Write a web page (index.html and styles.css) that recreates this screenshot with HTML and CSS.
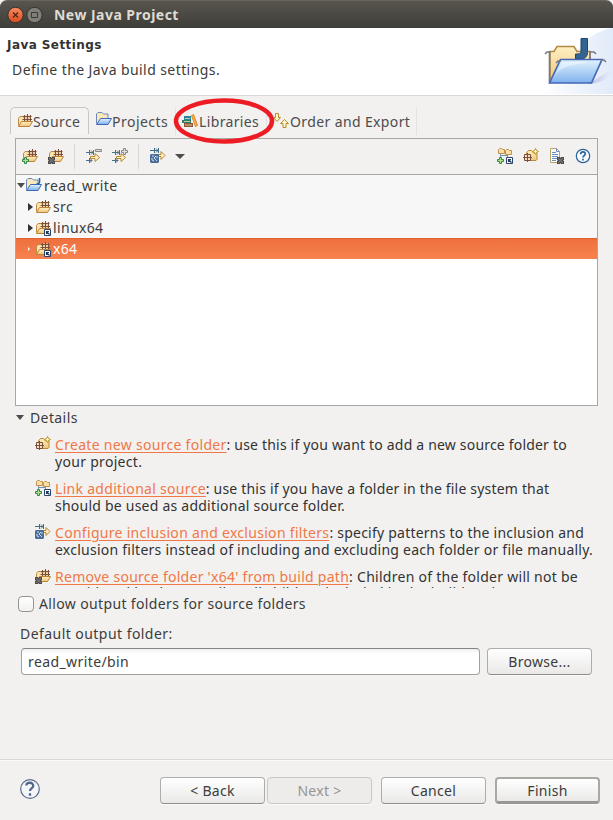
FILE: index.html
```html
<!DOCTYPE html>
<html lang="en">
<head>
<meta charset="utf-8">
<title>New Java Project</title>
<link rel="stylesheet" href="styles.css">
</head>
<body>
<svg class="defs" width="0" height="0" aria-hidden="true">
  <defs>
    <linearGradient id="gold" x1="0" y1="0" x2="0" y2="1"><stop offset="0" stop-color="#fff0c4"/><stop offset="1" stop-color="#eec477"/></linearGradient>
    <linearGradient id="blue" x1="0" y1="0" x2="0" y2="1"><stop offset="0" stop-color="#e3f3ff"/><stop offset="1" stop-color="#7eb1ed"/></linearGradient>
    <symbol id="source" viewBox="0 0 16 16">
      <path d="M1.500 12.500V5.500L3 3.500h3L7.500 5H13v6" fill="#fae3ae" stroke="#bf8a43"/>
      <path d="M7 2.500h6.500v6H7z" fill="#eccfa6"/>
      <path d="M6 3.500h8.500M5.500 6.500H15M7.500 2v6M10.500 1v7M13.500 2v6" fill="none" stroke="#79503b"/>
      <path d="M1.500 13.500L4.500 8.500h11l-3 5z" fill="url(#gold)" stroke="#bb8335"/>
    </symbol>
    <symbol id="plus" viewBox="0 0 16 16"><path d="M2.500 9.500h2v2h2v2h-2v2h-2v-2h-2v-2h2z" fill="#b5e08b" stroke="#2f8a4a"/></symbol>
    <symbol id="cross" viewBox="0 0 16 16"><path d="M0 9h7v7H0z" fill="#484848"/><path d="M1 10l5 5M6 10l-5 5" stroke="#777" stroke-width="1.200"/><path d="M3 9.500h1M0 12.500h1M6 12.500h1M3 15.500h1" stroke="#aaa"/></symbol>
    <symbol id="link" viewBox="0 0 16 16"><path d="M9.500 9.500h6v6h-6z" fill="#fff" stroke="#28446c"/><path d="M11.500 14v-2.500H14M11.500 11.500l3 3" fill="none" stroke="#20395d" stroke-width="1.200"/></symbol>
    <symbol id="new" viewBox="0 0 16 16">
      <path d="M3.500 12V5L5.500 2.500h3L10.500 5H14v6.500l-1 1H6" fill="url(#gold)" stroke="#bd872e"/>
      <path d="M12.500.5l1 2 2 1-2 1-1 2-1-2-2-1 2-1z" fill="#fff6bd" stroke="#b59422"/>
      <path d="M1.500 6.500h6v6h-6zM0 9.500h9M4.500 5v9" fill="#f4dcc2" stroke="#79503b"/>
    </symbol>
    <symbol id="addlink" viewBox="0 0 16 16">
      <path d="M1.500 5.500v-4l1-1h2l1 1h2v4zM8.500 6.500v-4l1-1h2l1 1h2v4z" fill="#fae1a2" stroke="#c29050"/>
      <path d="M3.500 6v3M10.500 7v2M4 7.500h6" stroke="#7595b1" fill="none"/>
      <use href="#plus"/><use href="#link"/>
    </symbol>
    <symbol id="arrow" viewBox="0 0 16 16"><path d="M4.500 8.500H9v-3l4.500 4-4.500 4v-3H4.500z" fill="#fff2c6" stroke="#b8862c"/></symbol>
    <symbol id="incl" viewBox="0 0 16 16">
      <path d="M0 4.500h7M0 12.500h6M3.500 2v5M7.500 2v5M3.500 10v5M5 2.500l2 2-2 2M4 10.500l2 2-2 2" stroke="#4b7089" fill="none"/>
      <use href="#arrow"/>
    </symbol>
    <symbol id="filter" viewBox="0 0 16 16">
      <path d="M0 2.500h8M4.500 0v5M8.500 0v5M6 .500l2 2-2 2" stroke="#446c87" fill="none"/>
      <path d="M8 6.500h3v-3l4 4-4 4v-3H8z" fill="#fff2c6" stroke="#b8862c"/>
      <path d="M1 6h7l1 1v7l-1 1H1l-1-1V7z" fill="#4a6e99"/><path d="M2 8h2M6 8l-2 2 3 3M2 10v2l2 1M6 9h2" stroke="#d3dfed" fill="none"/>
    </symbol>
    <symbol id="project" viewBox="0 0 16 16">
      <path d="M.5 12.500V3L2 1.500h4L7.500 3H12v5" fill="#f9e9b8" stroke="#6c86b7"/>
      <path d="M.5 13.500L4.500 7.500h11l-3.500 6z" fill="url(#blue)" stroke="#4068b9"/>
    </symbol>
    <symbol id="books" viewBox="0 0 16 16">
      <path d="M2 3h7v4H2z" fill="#2787a0"/><path d="M0 7h9v3H0z" fill="#2d8068"/><path d="M2 10h9v4H2z" fill="#93563b"/><path d="M3 5.500h5M2 8.500h6M3 12h7" stroke="#cdc29b"/><path d="M9.500 2.500l2-1 4 11-2 1z" fill="#f8b64c" stroke="#d88524"/>
    </symbol>
    <symbol id="order" viewBox="0 0 16 16"><path d="M2.500.5h3v4h2l-3.500 4-3.500-4h2zM10 14.500h3v-4h2.500l-4-4-4 4H10z" fill="#fff6cf" stroke="#b88b2b"/></symbol>
    <symbol id="edit" viewBox="0 0 16 16"><path d="M1.500.5h6l3 3v11h-9z" fill="#fafcff" stroke="#b5a56a"/><path d="M7.500.5v3h3M3 4.500h4M3 6.500h6M3 8.500h6M3 10.500h5M3 12.500h4" fill="none" stroke="#6b8fbe"/><use href="#cross" x="8"/></symbol>
    <symbol id="help" viewBox="0 0 16 16"><circle cx="8" cy="8" r="6.700" fill="#f9fbff" stroke="#286296" stroke-width="1.200"/><path d="M5.700 6.200c0-3 4.800-2.900 4.600-.2C10.200 7.500 8 7.700 8 9.500M8 10.700v1.700" fill="none" stroke="#286296" stroke-width="1.700"/></symbol>
  </defs>
</svg>

<main class="window">
  <header class="titlebar">
    <svg class="controls" viewBox="0 0 44 28">
      <defs><linearGradient id="close" x1="0" y1="0" x2="0" y2="1"><stop stop-color="#f78b61"/><stop offset="1" stop-color="#dd4b20"/></linearGradient></defs>
      <circle cx="15.500" cy="14" r="7.700" fill="url(#close)" stroke="#35322d"/><path d="M13 11.500l5 5M18 11.500l-5 5" stroke="#522617" stroke-width="1.300"/>
      <circle cx="34.500" cy="14" r="7.700" fill="#807e77" stroke="#34332e"/><path d="M31.500 11.500h6v5h-6z" fill="none" stroke="#3b3934"/>
    </svg>
    <h1>New Java Project</h1>
  </header>

  <section class="banner">
    <div class="banner-copy"><h2>Java Settings</h2><p>Define the Java build settings.</p></div>
    <svg class="banner-art" viewBox="0 0 75 66">
      <defs><linearGradient id="haze"><stop stop-color="#fff"/><stop offset="1" stop-color="#d8e4f7"/></linearGradient><linearGradient id="shade"><stop stop-color="#8b94c0" stop-opacity=".6"/><stop offset="1" stop-color="#b5b5d8" stop-opacity="0"/></linearGradient></defs>
      <path d="M0 66C28 64 29 7 75 0v66z" fill="url(#haze)" opacity=".75"/>
      <path d="M50 56l22-14c4 3-3 12-20 14z" fill="url(#shade)"/>
      <path d="M12 54V23.500h4l3-5h17l3 5h13V54" fill="url(#gold)" stroke="#b18a42" stroke-width="1.500"/>
      <path d="M7 26l2-2h3M11.500 23v31M52 24h4l2 2M52 23v10" fill="none" stroke="#777985" stroke-width="1.600"/>
      <path d="M43 10.500h6.500v14c0 4-3 6.500-6 6.500h-6v-5H40c2 0 3-1 3-3z" fill="#336591" stroke="#1d4673"/>
      <path d="M11.500 55L22.500 31.500H64L53.500 55z" fill="url(#blue)" stroke="#4667b6" stroke-width="1.700"/>
      <path d="M14 52c7-8 3-13 38-18H24z" fill="#fff" opacity=".4"/>
      <path d="M18 35l2-2h3M63 32h3l2 2" fill="none" stroke="#777985" stroke-width="1.600"/>
    </svg>
  </section>

  <nav class="tabs">
    <div class="tab active"><svg><use href="#source"/></svg><span>Source</span></div>
    <div class="tab projects"><svg><use href="#project"/></svg><span>Projects</span></div>
    <div class="tab libraries"><svg><use href="#books"/></svg><span>Libraries</span><svg class="ring" viewBox="0 0 102 46"><ellipse cx="51" cy="23" rx="48" ry="20.500"/></svg></div>
    <div class="tab order"><svg><use href="#order"/></svg><span>Order and Export</span></div>
  </nav>

  <section class="panel">
    <div class="toolbar">
      <svg><use href="#source"/><use href="#plus"/></svg>
      <svg class="g10"><use href="#source"/><use href="#cross"/></svg>
      <i class="sep"></i>
      <svg class="g11"><use href="#incl"/><path d="M9.500 1.500h6v2h-6z" fill="#ddd" stroke="#888"/></svg>
      <svg class="g10"><use href="#incl"/><path d="M11.500.5h2v2h2v2h-2v2h-2v-2h-2v-2h2z" fill="#ddd" stroke="#888"/></svg>
      <i class="sep"></i>
      <svg class="g11"><use href="#filter"/></svg>
      <i class="down menu"></i>
      <svg class="right"><use href="#addlink"/></svg>
      <svg class="g10"><use href="#new"/></svg>
      <svg class="g10"><use href="#edit"/></svg>
      <svg class="g10"><use href="#help"/></svg>
    </div>
    <div class="tree">
      <div class="row root"><i class="down"></i><svg><use href="#project"/><path d="M13.500 1v4q0 2-3 2" fill="none" stroke="#286799" stroke-width="1.600"/></svg><span>read_write</span></div>
      <div class="row"><i class="side"></i><svg><use href="#source"/></svg><span>src</span></div>
      <div class="row"><i class="side"></i><svg><use href="#source"/><use href="#link"/></svg><span>linux64</span></div>
      <div class="row selected"><i class="side"></i><svg><use href="#source"/><use href="#link"/></svg><span>x64</span></div>
    </div>
  </section>

  <div class="details-title"><i class="down"></i><span>Details</span></div>
  <section class="details">
    <div class="hint"><svg><use href="#new"/></svg><p><a>Create new source folder</a>: use this if you want to add a new source folder to<br><span class="wide">your project.</span></p></div>
    <div class="hint"><svg><use href="#addlink"/></svg><p><a>Link additional source</a>: use this if you have a folder in the file system that<br><span class="mid">should be used as additional source folder.</span></p></div>
    <div class="hint"><svg><use href="#filter"/></svg><p class="mid"><a>Configure inclusion and exclusion filters</a>: specify patterns to the inclusion and<br><span class="manual">exclusion filters instead of including and excluding each folder or file manually.</span></p></div>
    <div class="hint"><svg><use href="#source"/><use href="#cross"/></svg><p class="last"><a>Remove source folder 'x64' from build path</a>: Children of the folder will not be<span class="clipped">considered by the compiler, all children included in the build path</span></p></div>
  </section>
  <label class="allow"><i class="check"></i><span>Allow output folders for source folders</span></label>
  <div class="output-label">Default output folder:</div>
  <div class="output"><div class="field">read_write/bin</div><div class="button browse">Browse...</div></div>
  <footer class="footer">
    <svg class="footer-help" viewBox="0 0 20 20"><circle cx="10" cy="10" r="9.300" fill="#f5f6f8" stroke="#5a6c8b" stroke-width="1.200"/><path d="M6.300 6.500C6.500 2.500 13.500 3 13.200 7c-.2 2.500-3.200 2.500-3.200 5M10 14.200v2.500" fill="none" stroke="#52688d" stroke-width="2.300"/></svg>
    <div class="button back">&lt; Back</div>
    <div class="button next">Next &gt;</div>
    <div class="button cancel">Cancel</div>
    <div class="button finish">Finish</div>
  </footer>
</main>
</body>
</html>
```
FILE: styles.css
```css
* { box-sizing: border-box; }
body { margin: 0; background: #f2f1f0; color: #3c3c3c; font: 14px/17px "Noto Sans", sans-serif; letter-spacing: .4px; }
h1, h2, p { margin: 0; }
.defs { position: absolute; }
.window { width: 613px; height: 820px; display: flex; flex-direction: column; overflow: hidden; white-space: nowrap; }
svg { display: block; flex: none; width: 16px; height: 16px; }
.titlebar { height: 28px; flex: none; display: flex; align-items: center; background: linear-gradient(#57554d, #3e3d39); border-top: 1px solid #66645c; border-radius: 7px 7px 0 0; color: #dfdbd2; }
.titlebar .controls { width: 44px; height: 28px; }
h1 { margin-left: 10px; font-size: 14px; font-weight: 700; letter-spacing: .47px; }
.banner { height: 68px; flex: none; display: flex; justify-content: space-between; background: #fff; border-bottom: 1px solid #d8d7d5; }
.banner-copy { padding: 8px 0 0 7px; }
h2 { font: bold 12px/17px "DejaVu Sans", sans-serif; color: #333; letter-spacing: .42px; padding-top: 1px; }
.banner-copy p { padding: 7px 0 0 5px; letter-spacing: .42px; }
.banner .banner-art { width: 75px; height: 66px; }
.tabs { height: 42px; flex: none; padding: 11px 0 0 10px; display: flex; }
.tab { display: flex; align-items: center; height: 28px; color: #4c4c4c; }
.tab span { padding-top: 1px; }
.active { width: 79px; height: 27px; padding: 0 0 1px 6px; border: 1px solid #c9c7c5; border-bottom: 0; border-radius: 5px 5px 0 0; background: #f4f3f2; }
.projects { width: 87px; padding-left: 7px; border-right: 1px solid #e3e2e0; letter-spacing: .48px; }
.projects svg { margin-bottom: 4px; }
.libraries { position: relative; width: 91px; padding-left: 6px; border-right: 1px solid #e3e2e0; letter-spacing: .36px; }
.libraries span { padding-left: 1px; }
.order { width: 150px; padding-left: 6px; border-right: 1px solid #e3e2e0; letter-spacing: .38px; }
.order span { padding-left: 1px; }
.tab .ring { position: absolute; z-index: 2; left: -3px; top: -9px; width: 102px; height: 46px; overflow: visible; }
.ring ellipse { fill: none; stroke: #ed1c24; stroke-width: 4.5px; }
.panel { flex: none; width: 583px; height: 268px; margin-left: 15px; border: 1px solid #a9a7a4; background: #fff; }
.toolbar { height: 36px; display: flex; align-items: center; padding: 0 6px 1px 6px; background: #f2f1f0; border-bottom: 1px solid #a9a7a4; }
.sep { width: 1px; height: 25px; background: #d8d7d5; margin-left: 10px; }
.g10 { margin-left: 10px; }
.g11 { margin-left: 11px; }
.down { width: 0; height: 0; flex: none; border: 4px solid transparent; border-top: 5px solid #4c4c4c; border-bottom: 0; }
.menu { border-width: 5px; border-top-width: 5px; border-bottom: 0; margin-left: 9px; }
.right { margin-left: auto; }
.row { height: 21px; display: flex; align-items: center; padding-left: 12px; background: #f7f7f7; letter-spacing: .35px; }
.row svg { margin: 0 1px 0 2px; }
.root { padding-left: 1px; letter-spacing: .4px; }
.root svg { margin: 0 2px 2px 1px; }
.side { width: 5px; border: 4px solid transparent; border-left: 5px solid #333; border-right: 0; }
.row span { padding-left: 1px; }
.root span { padding-left: 0; }
.selected { color: #fff; background: linear-gradient(#ed6f3c, #f88350); box-shadow: inset 0 1px #df622f; }
.selected .side { border-width: 2px 0 2px 2px; border-left-color: #fff; width: 2px; margin-right: 3px; }
.details-title { flex: none; height: 26px; display: flex; align-items: center; padding: 0 0 3px 16px; }
.details-title span { margin-left: 6px; }
.details { flex: none; height: 156px; padding: 4px 0 0 35px; overflow: hidden; letter-spacing: .19px; }
.hint { display: flex; gap: 4px; height: 44px; color: #333; }
.hint a { color: #f07746; letter-spacing: .3px; text-decoration: underline; text-decoration-thickness: 1px; text-underline-offset: 2px; }
.wide { letter-spacing: .3px; }
.mid { letter-spacing: .23px; }
.manual { letter-spacing: .25px; }
.last, .last a { letter-spacing: .27px; }
.clipped { display: block; margin-top: -1px; }
.allow { flex: none; height: 32px; display: flex; align-items: center; padding-left: 18px; gap: 5px; letter-spacing: .36px; }
.allow span { padding-bottom: 2px; }
.check { width: 16px; height: 16px; border: 1px solid #969492; border-radius: 4px; background: linear-gradient(#fff, #f2f1f0); }
.output-label { flex: none; height: 28px; padding: 5px 0 0 20px; letter-spacing: .45px; }
.output { flex: none; display: flex; gap: 7px; padding-left: 21px; }
.field { width: 459px; height: 27px; border: 1px solid #a3a19f; border-top-color: #858381; border-radius: 4px; background: linear-gradient(#f1f1f1, #fff 5px); padding: 4px 6px; }
.button { width: 105px; height: 27px; flex: none; display: flex; align-items: center; justify-content: center; border: 1px solid #afadab; border-bottom-color: #8f8d8a; border-radius: 4px; background: linear-gradient(#fff, #eae9e8); box-shadow: 0 1px #fafafa; letter-spacing: .3px; }
.footer { height: 61px; margin-top: auto; display: flex; align-items: flex-start; padding: 17px 0 0 20px; border-top: 1px solid #d8d7d5; box-shadow: inset 0 1px #faf9f8; }
.footer .footer-help { width: 20px; height: 20px; margin-top: 2px; }
.back { margin-left: 120px; }
.next { margin-left: 2px; color: #969492; background: #edeceb; border-color: #c9c7c5; }
.cancel { margin-left: 9px; }
.finish { margin-left: 9px; border: 2px solid #aaa8a5; border-bottom: 3px solid #999794; }
```
